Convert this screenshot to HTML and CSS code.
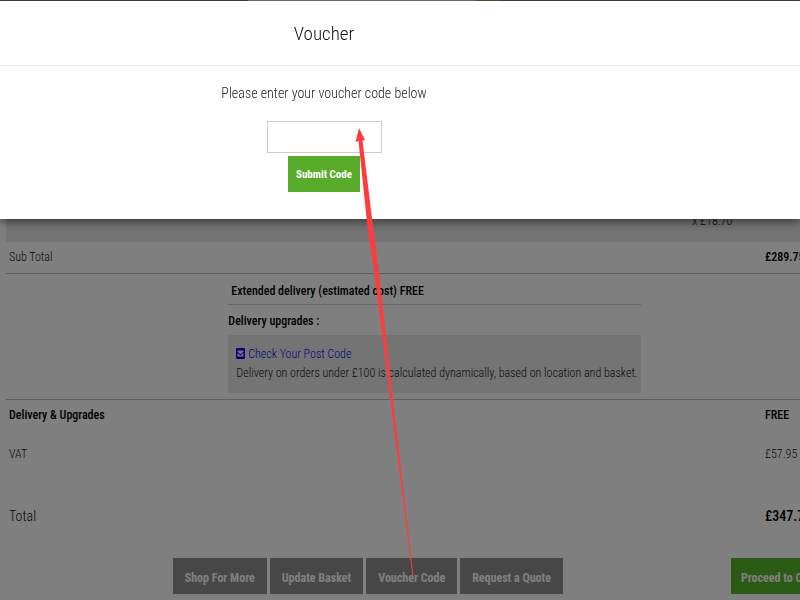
FILE: index.html
```html
<!DOCTYPE html>
<html lang="en">
<head>
    <meta charset="UTF-8">
    <meta name="viewport" content="width=device-width, initial-scale=1.0">
    <title>Basket</title>
    <link rel="stylesheet" href="styles.css">
</head>
<body>
    <header class="topbar">
        <span class="topbar-panel"></span>
        <span class="topbar-tab"></span>
    </header>
    <main class="basket">
        <table class="basket-table">
            <colgroup>
                <col class="col-name">
                <col class="col-detail">
                <col class="col-qty">
                <col class="col-price">
            </colgroup>
            <tbody>
                <tr class="row-product">
                    <td></td>
                    <td></td>
                    <td class="qty">x £18.70</td>
                    <td></td>
                </tr>
                <tr class="row-subtotal">
                    <td>Sub Total</td>
                    <td></td>
                    <td></td>
                    <td class="strong">£289.75</td>
                </tr>
                <tr class="row-delivery">
                    <td></td>
                    <td class="delivery">
                        <p class="delivery-cost">Extended delivery (estimated cost) FREE</p>
                        <p class="delivery-title">Delivery upgrades :</p>
                        <div class="delivery-box">
                            <a href="#"><svg class="icon" viewBox="0 0 9 11"><path fill="currentColor" fill-rule="evenodd" d="M1 0h7a1 1 0 0 1 1 1v9a1 1 0 0 1-1 1H1a1 1 0 0 1-1-1V1a1 1 0 0 1 1-1zM1.500 2.500v1.200L4.500 6.200 7.500 3.700V2.500zM1.500 5v3.500h6V5L4.500 7.500z"/></svg>Check Your Post Code</a>
                            <p>Delivery on orders under £100 is calculated dynamically, based on location and basket.</p>
                        </div>
                    </td>
                    <td></td>
                    <td></td>
                </tr>
                <tr class="row-upgrades strong">
                    <td>Delivery &amp; Upgrades</td>
                    <td></td>
                    <td></td>
                    <td>FREE</td>
                </tr>
                <tr class="row-vat">
                    <td>VAT</td>
                    <td></td>
                    <td></td>
                    <td>£57.95</td>
                </tr>
                <tr class="row-total">
                    <td>Total</td>
                    <td></td>
                    <td></td>
                    <td class="strong">£347.70</td>
                </tr>
            </tbody>
        </table>
        <div class="actions">
            <div class="actions-left">
                <button type="button" class="btn">Shop For More</button>
                <button type="button" class="btn">Update Basket</button>
                <button type="button" class="btn">Voucher Code</button>
                <button type="button" class="btn">Request a Quote</button>
            </div>
            <button type="button" class="btn btn-green">Proceed to Checkout</button>
        </div>
    </main>

    <div class="backdrop"></div>
    <section class="modal" role="dialog" aria-labelledby="voucher-title">
        <h1 class="modal-title" id="voucher-title">Voucher</h1>
        <form class="modal-body">
            <label for="voucher">Please enter your voucher code below</label>
            <input type="text" id="voucher">
            <button type="submit" class="btn-submit">Submit Code</button>
        </form>
    </section>

    <svg class="arrow" width="800" height="600" viewBox="0 0 800 600">
        <path fill="#ff3b3b" d="M359 128L355.500 142 358.500 141 367.700 229 374 270 391.500 409 412.500 577 413.500 577 394 409 378.500 270 373.300 229 362.500 140.500 365 140z"/>
    </svg>
</body>
</html>
```
FILE: styles.css
```css
* {
    box-sizing: border-box;
}
body {
    margin: 0;
    height: 100vh;
    overflow: hidden;
    background: #fff;
    color: #111;
    font-family: "Roboto Condensed", Roboto, sans-serif;
    font-size: 12px;
    font-weight: 300;
    line-height: 19px;
}
p {
    margin: 0;
}
a {
    color: #10f;
    text-decoration: none;
}
button {
    font-family: inherit;
    font-weight: bold;
}
.strong {
    color: #000;
    font-weight: 500;
}
.topbar {
    display: flex;
    height: 8px;
    padding-left: 31%;
    background: #848f89;
}
.topbar-panel {
    width: 228px;
    background: #f6ecec;
}
.topbar-tab {
    width: 23px;
    background: #96b85c;
}

/* Basket */
.basket {
    padding-left: 6px;
}
.basket-table {
    width: 100%;
    table-layout: fixed;
    border-collapse: collapse;
}
.basket-table td {
    padding: 1px 3px 0;
    white-space: nowrap;
}
.col-name {
    width: 28%;
}
.col-detail {
    width: 52%;
}
.col-price {
    width: 38px;
}
.row-product {
    height: 234px;
    background: #e8e8e8;
}
.basket-table .qty {
    padding: 0 0 11px 51px;
    vertical-align: bottom;
}
.row-subtotal {
    height: 31px;
    border-bottom: 1px solid #bbb;
}
.row-delivery {
    height: 126px;
    border-bottom: 1px solid #bbb;
}
.basket-table .delivery {
    padding: 0;
    vertical-align: top;
}
.delivery-cost,
.delivery-title {
    color: #000;
    font-weight: 500;
}
.delivery-cost {
    padding: 8px 3px 3px;
    border-bottom: 1px solid #ccc;
}
.delivery-title {
    padding: 7px 0 4px;
}
.delivery-box {
    padding: 10px 8px;
    background: #e8e8e8;
}
.icon {
    width: 9px;
    height: 11px;
    margin-right: 3px;
    vertical-align: -1px;
}
.row-upgrades {
    height: 32px;
}
.row-vat {
    height: 46px;
}
.row-total {
    height: 78px;
    font-size: 14px;
}
.actions {
    display: flex;
    justify-content: space-between;
    padding: 3px 0 0 21%;
}
.actions-left {
    display: flex;
    gap: 3px;
}
.btn {
    height: 36px;
    padding: 3px 12px 0;
    border: 0;
    background: #8e8e8e;
    color: #fff;
    font-size: 12px;
    white-space: nowrap;
}
.btn-green {
    width: 69px;
    padding-left: 10px;
    background: #56b428;
    text-align: left;
}

/* Voucher dialog */
.backdrop {
    position: fixed;
    inset: 0;
    background: rgba(0, 0, 0, 0.5);
}
.modal {
    position: absolute;
    top: 1px;
    left: 0;
    right: 0;
    background: #fff;
    box-shadow: 0 3px 9px rgba(0, 0, 0, 0.5);
    text-align: center;
}
.modal-title {
    margin: 0;
    padding: 20px 19% 19px 0;
    border-bottom: 1px solid #e8e8e8;
    font-size: 19px;
    font-weight: 300;
    line-height: 25px;
}
.modal-body {
    display: flex;
    flex-direction: column;
    align-items: center;
    padding: 18px 19% 27px 0;
}
.modal-body label {
    margin-bottom: 18px;
    color: #222;
    font-size: 14px;
}
.modal-body input {
    width: 115px;
    height: 32px;
    margin-bottom: 3px;
    padding: 0 8px;
    border: 1px solid #ccc;
}
.btn-submit {
    height: 36px;
    padding: 0 8px;
    border: 0;
    background: #58ac2a;
    color: #fff;
    font-size: 11px;
}
.arrow {
    position: absolute;
    top: 0;
    left: 0;
}
```
